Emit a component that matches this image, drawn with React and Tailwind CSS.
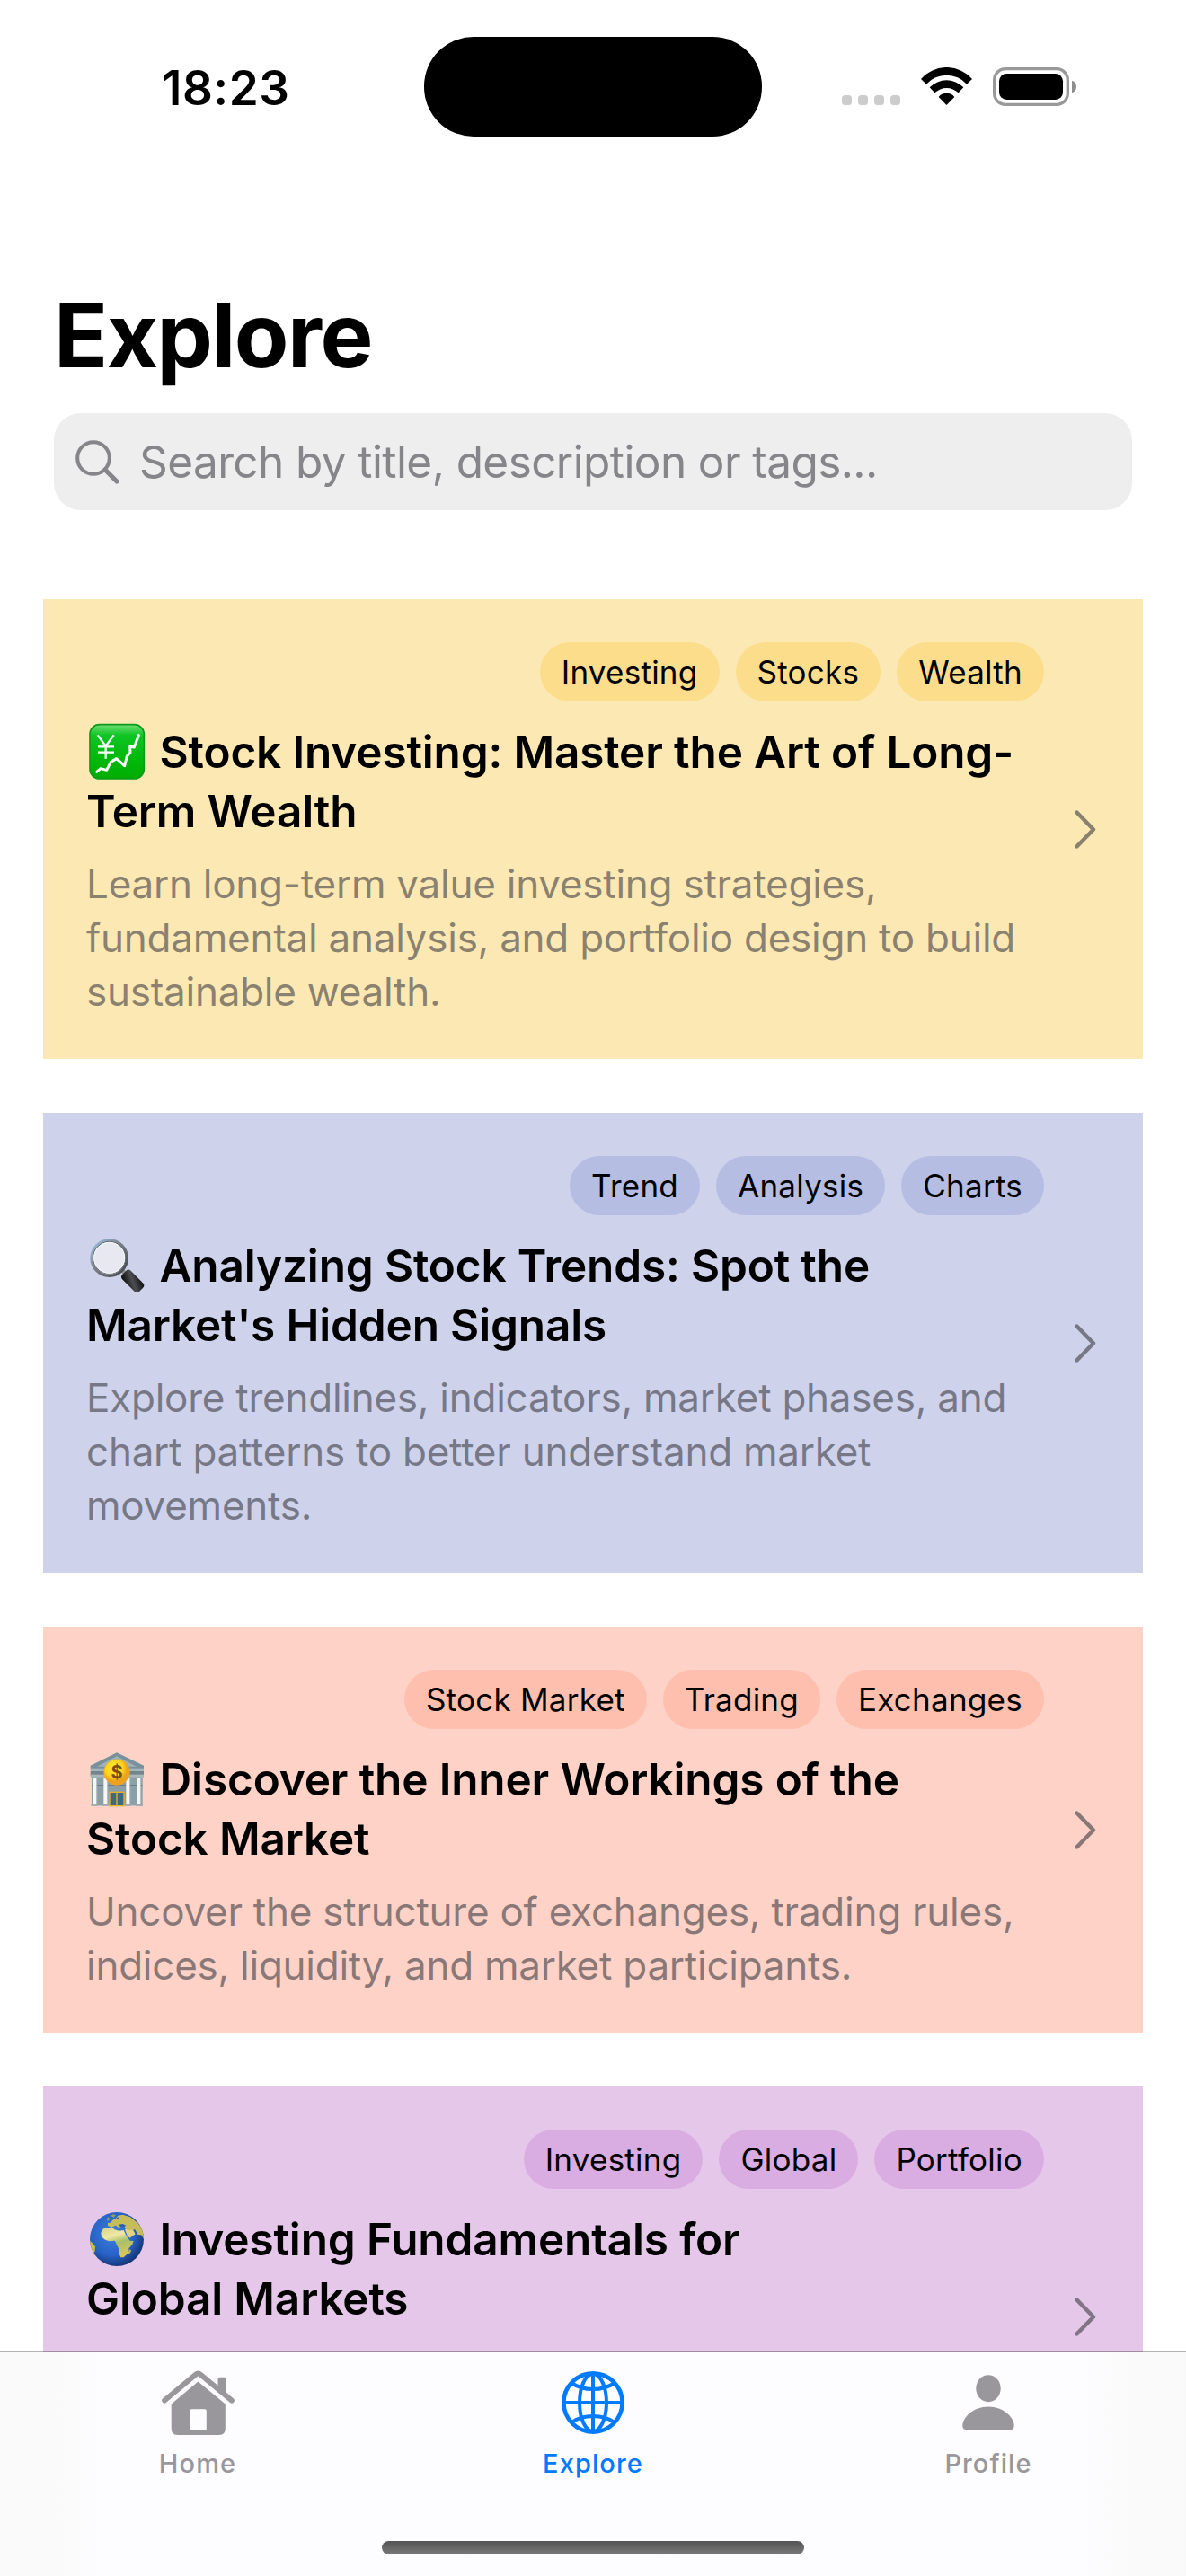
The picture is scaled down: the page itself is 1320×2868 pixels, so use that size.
const courses = [
    {
        id: 1,
        icon: 'chart',
        tags: ['Investing', 'Stocks', 'Wealth'],
        title: ['Stock Investing: Master the Art of Long-', 'Term Wealth'],
        description: [
            'Learn long-term value investing strategies,',
            'fundamental analysis, and portfolio design to build',
            'sustainable wealth.',
        ],
        card: 'bg-[#fce8b2] h-[512px]',
        tag: 'bg-[#fbdd8c]',
    },
    {
        id: 2,
        icon: 'magnifier',
        tags: ['Trend', 'Analysis', 'Charts'],
        title: ['Analyzing Stock Trends: Spot the', "Market's Hidden Signals"],
        description: [
            'Explore trendlines, indicators, market phases, and',
            'chart patterns to better understand market',
            'movements.',
        ],
        card: 'bg-[#ced2eb] h-[512px]',
        tag: 'bg-[#b6bde3]',
    },
    {
        id: 3,
        icon: 'bank',
        tags: ['Stock Market', 'Trading', 'Exchanges'],
        title: ['Discover the Inner Workings of the', 'Stock Market'],
        description: [
            'Uncover the structure of exchanges, trading rules,',
            'indices, liquidity, and market participants.',
        ],
        card: 'bg-[#fed2c6] h-[452px]',
        tag: 'bg-[#febfae]',
    },
    {
        id: 4,
        icon: 'globe',
        tags: ['Investing', 'Global', 'Portfolio'],
        title: ['Investing Fundamentals for', 'Global Markets'],
        description: [],
        card: 'bg-[#e5c8e9] h-[512px]',
        tag: 'bg-[#d9ade2]',
    },
];

const emojiClass = 'inline-block w-[66px] h-[66px] mr-[15.5px] align-[-15px]';

function CourseEmoji({ name }) {
    if (name === 'chart') {
        return (
            <svg viewBox="48 72 198 198" className={emojiClass}>
                <defs>
                    <linearGradient id="green" x1="0" y1="0" x2="0" y2="1">
                        <stop offset="0" stopColor="#6fdc74" />
                        <stop offset="0.2" stopColor="#0fc524" />
                        <stop offset="0.6" stopColor="#00b90d" />
                        <stop offset="1" stopColor="#00ad00" />
                    </linearGradient>
                </defs>
                <rect x="60" y="80" width="181" height="181" rx="32" fill="url(#green)" stroke="#0b9a1c" strokeWidth="5" />
                <path d="M86 115l27 37 27-37M113 152v42M87 154h54M87 173h54" fill="none" stroke="#fff" strokeWidth="7" />
                <path d="M83 238l13-11 20 5 14-27 19-11 27 24 8-32 11-12-1-20 14 2 15-40" fill="none" stroke="#fff" strokeWidth="9" strokeLinejoin="round" strokeLinecap="round" />
            </svg>
        );
    }
    if (name === 'magnifier') {
        return (
            <svg viewBox="48 63 198 198" className={emojiClass}>
                <defs>
                    <linearGradient id="rim" x1="0" y1="0" x2="1" y2="1">
                        <stop offset="0" stopColor="#9fc4e6" />
                        <stop offset="0.45" stopColor="#7b8088" />
                        <stop offset="1" stopColor="#3f4347" />
                    </linearGradient>
                    <linearGradient id="handle" x1="0" y1="1" x2="1" y2="0">
                        <stop offset="0" stopColor="#050505" />
                        <stop offset="0.5" stopColor="#4c4d50" />
                        <stop offset="1" stopColor="#0a0a0b" />
                    </linearGradient>
                </defs>
                <path d="M168 178l14 14" stroke="#8b8e93" strokeWidth="14" />
                <rect x="-40" y="-20" width="80" height="40" rx="12" transform="translate(203 214) rotate(45)" fill="url(#handle)" />
                <circle cx="125" cy="137" r="59" fill="#e8e9f0" stroke="url(#rim)" strokeWidth="10" />
                <circle cx="125" cy="136" r="54" fill="none" stroke="#55595e" strokeWidth="2.5" />
                <circle cx="125" cy="136" r="51" fill="none" stroke="#f6f7fa" strokeWidth="3" />
            </svg>
        );
    }
    if (name === 'bank') {
        return (
            <svg viewBox="48 69 198 198" className={emojiClass}>
                <defs>
                    <radialGradient id="coin" cx="0.4" cy="0.35">
                        <stop offset="0" stopColor="#ffec35" />
                        <stop offset="0.7" stopColor="#fbd21c" />
                        <stop offset="1" stopColor="#eda11c" />
                    </radialGradient>
                </defs>
                <rect x="66" y="155" width="170" height="101" fill="#8d9fa6" />
                <path d="M66 189h170" stroke="#6b7d85" strokeWidth="6" />
                <path d="M150 79L62 122v10h178v-10z" fill="#78919a" />
                <path d="M150 91L84 125h132z" fill="#9fb3b8" />
                <rect x="62" y="131" width="178" height="12" fill="#a6b5b9" />
                <rect x="62" y="141" width="178" height="15" fill="#73858c" />
                <rect x="62" y="152" width="178" height="9" fill="#a9b6ba" />
                <path d="M76 162v88M112 162v88M187 162v88M223 162v88" stroke="#f5f6f8" strokeWidth="12" />
                <path d="M83 164v86M119 164v86M194 164v86M230 164v86" stroke="#b6bfc5" strokeWidth="3" />
                <path d="M64 254h24M102 254h22M177 254h22M212 254h25" stroke="#9cabb1" strokeWidth="7" />
                <rect x="126" y="211" width="48" height="46" fill="#3f6a7d" stroke="#e8b124" strokeWidth="4" />
                <path d="M150 211v46" stroke="#e8b124" strokeWidth="4" />
                <circle cx="150" cy="144" r="43" fill="url(#coin)" stroke="#eba62a" strokeWidth="2" />
                <text x="150" y="165" textAnchor="middle" fontSize="60" fontWeight="700" fill="#7c4a12" className="font-['Inter']">$</text>
            </svg>
        );
    }
    return (
        <svg viewBox="48 60 198 198" className={emojiClass}>
            <defs>
                <radialGradient id="ocean" cx="0.42" cy="0.4" r="0.62">
                    <stop offset="0" stopColor="#3d7fdc" />
                    <stop offset="0.65" stopColor="#2762c4" />
                    <stop offset="1" stopColor="#143575" />
                </radialGradient>
                <linearGradient id="land" x1="0" y1="0" x2="0.3" y2="1">
                    <stop offset="0" stopColor="#d6d184" />
                    <stop offset="0.35" stopColor="#f0e9a6" />
                    <stop offset="0.6" stopColor="#a8bf6a" />
                    <stop offset="1" stopColor="#d5c65e" />
                </linearGradient>
                <clipPath id="earth">
                    <circle cx="150" cy="159" r="90" />
                </clipPath>
            </defs>
            <circle cx="150" cy="159" r="90" fill="url(#ocean)" />
            <g clipPath="url(#earth)">
                <path d="M105 124l20-4 14 1 2 5 16 5 16-2 9 19 12 16 12 1-4 11-12 14 1 14-11 9-7 7-10 0-6-14-1-16-7-14-5-12-19 2-14-5-12-10-2-14z" fill="url(#land)" />
                <path d="M177 127l23-6 12 21-19 13-9-10z" fill="#e3d37c" />
                <path d="M120 113l0-8 10-1 6-9 10-4 8-11 16-3 25 8 25 20 18 24 9 22-3 15-12-21-12-1-9-17-20 2-12-4-3-9-13 2-7 3-9-8-9 3-5 4z" fill="#c6bd5a" />
                <path d="M130 81l7-5 10 2-7 8zM116 91l6-6 5 8-8 5z" fill="#8fa455" />
                <path d="M157 110l13-2 11 5-5 4-14 1zM148 89l10-6-3 10z" fill="#2a5fae" />
                <path d="M187 204l8-12 3 7-7 11z" fill="#c3b650" />
                <path d="M58 163l11 9 9 12-1 15-5 10-12-20z" fill="#c9bd3c" />
            </g>
        </svg>
    );
}

function CourseCard({ course }) {
    return (
        <div className={`shrink-0 flex items-center justify-between pl-12 pr-[52px] ${course.card}`}>
            <div className="w-[1066px] h-full pt-12">
                <div className="flex justify-end gap-[18px]">
                    {course.tags.map(tag => (
                        <span key={tag} className={`h-[66px] px-6 rounded-[33px] text-[35px] leading-[66px] tracking-[0.25px] ${course.tag}`}>
                            {tag}
                        </span>
                    ))}
                </div>
                <h2 className="mt-[23px] text-[49.5px] leading-[66px] font-semibold tracking-[-0.15px] whitespace-nowrap">
                    <CourseEmoji name={course.icon} />
                    {course.title[0]}
                    <br />
                    {course.title[1]}
                </h2>
                <p className="mt-[18px] text-[44px] leading-[60px] tracking-[-0.25px] text-[#3c3c43]/60 whitespace-nowrap">
                    {course.description.map(line => (
                        <span key={line} className="block">{line}</span>
                    ))}
                </p>
            </div>
            <svg viewBox="0 0 24 43" className="w-6 h-[43px] text-[#3c3c43]/60">
                <path d="M2.5 2.5L21 21.5 2.5 40.5" fill="none" stroke="currentColor" strokeWidth="4.4" strokeLinecap="round" strokeLinejoin="round" />
            </svg>
        </div>
    );
}

function StatusBar() {
    return (
        <div className="h-[177px] shrink-0 flex items-start">
            <div className="w-[472px] pl-[180px] pt-[68px] text-[53px] leading-[60px] font-semibold tracking-[0.5px]">18:23</div>
            <div className="w-[376px] h-[111px] mt-[41px] rounded-[55px] bg-black" />
            <div className="flex gap-[23px] ml-[89px] mt-[75px] h-[43px]">
                {/* no signal */}
                <div className="flex items-end gap-[7px] pb-px">
                    <div className="w-[11px] h-[11px] rounded-[3.5px] bg-[#cccccc]" />
                    <div className="w-[11px] h-[11px] rounded-[3.5px] bg-[#cccccc]" />
                    <div className="w-[11px] h-[11px] rounded-[3.5px] bg-[#cccccc]" />
                    <div className="w-[11px] h-[11px] rounded-[3.5px] bg-[#cccccc]" />
                </div>
                {/* wifi */}
                <svg viewBox="375 75 171 126" className="w-[57px] h-[42px]">
                    <path d="M375 114A113 113 0 0 1 546 114L528 131A91 91 0 0 0 393 131Z" />
                    <path d="M404 142A78.5 78.5 0 0 1 517 142L500 160A57 57 0 0 0 421 160Z" />
                    <path d="M434 174A33.5 33.5 0 0 1 487 174L460.500 201Z" />
                </svg>
                {/* battery */}
                <svg viewBox="615 75 279 129" className="w-[93px] h-[43px]">
                    <rect x="620" y="80" width="245" height="119" rx="37" fill="none" stroke="#999" strokeWidth="10" />
                    <rect x="636" y="96" width="213" height="87" rx="25" />
                    <path d="M879 119q15 5 15 20.500t-15 20.500z" fill="#8c8c8c" />
                </svg>
            </div>
        </div>
    );
}

function TabBar() {
    return (
        <nav className="relative -mt-px h-[250px] shrink-0 flex flex-col items-center border-t border-black/30 bg-clip-padding bg-[linear-gradient(to_right,#f9f9f9,#fdfcfe_10%,#fdfcfe_90%,#f9f9f9)]">
            <div className="w-full grid grid-cols-3 pt-5 text-[29px] leading-9 font-medium tracking-[1.1px] text-[#99979b]">
                <div className="flex flex-col items-center">
                    <div className="h-[72px] flex items-center">
                        <svg viewBox="0 0 81 72" className="w-[81px] h-[72px]">
                            <path d="M3.200 33.500L38 4.500q2.500-2 5 0L77.800 33.500" fill="none" stroke="#99979b" strokeWidth="6" strokeLinecap="round" strokeLinejoin="round" />
                            <path d="M62.500 20V10q0-2.300 2.300-2.300h5Q72 7.700 72 10V28z" fill="#99979b" />
                            <path fillRule="evenodd" d="M40.500 12.500L70.800 37.500V65q0 7-7 7H17.700q-7 0-7-7V37.500zM33 43.300q-1.800 0-1.800 1.800V66.300H49.800V45.100q0-1.800-1.800-1.800z" fill="#99979b" />
                        </svg>
                    </div>
                    <span className="mt-[14px]">Home</span>
                </div>
                <div className="flex flex-col items-center text-[#007aff]">
                    <div className="h-[72px] flex items-center">
                        <svg viewBox="0 0 70 70" className="w-[70px] h-[70px]" fill="none" stroke="currentColor" strokeWidth="4">
                            <circle cx="35" cy="35" r="32.600" strokeWidth="4.600" />
                            <ellipse cx="35" cy="35" rx="15" ry="32" />
                            <path d="M35 2v66M2 35h66" />
                            <path d="M11 13Q21 20 35 20T59 13M11 57Q21 50 35 50T59 57" />
                        </svg>
                    </div>
                    <span className="mt-[14px]">Explore</span>
                </div>
                <div className="flex flex-col items-center">
                    <div className="h-[72px] flex items-center">
                        <svg viewBox="0 0 58 62" className="w-[58px] h-[62px]" fill="#99979b">
                            <ellipse cx="29" cy="15.200" rx="13.700" ry="15" />
                            <path d="M29 35.500C46 35.500 57.700 47.500 57.700 56.500Q57.700 61.500 52.500 61.500H5.500Q.3 61.500 .3 56.500C.3 47.500 12 35.500 29 35.500z" />
                        </svg>
                    </div>
                    <span className="mt-[14px]">Profile</span>
                </div>
            </div>
            {/* home indicator */}
            <div className="mt-auto mb-6 w-[470px] h-[15px] rounded-full bg-linear-to-b from-[#545454] to-[#7a7a7a]" />
        </nav>
    );
}

export default function App() {
    return (
        <div className="w-[1320px] h-[2868px] flex flex-col overflow-hidden bg-white text-black font-['Inter',sans-serif]">
            <StatusBar />
            <header className="h-[490px] shrink-0 px-[60px] pt-[136px]">
                <h1 className="text-[99px] leading-[120px] font-bold tracking-[-1.5px]">Explore</h1>
                <div className="mt-[27px] h-[108px] flex items-center gap-[22px] pl-6 rounded-[30px] bg-[#eeeeee] text-[#85858a]">
                    <svg viewBox="0 0 49 49" className="w-[49px] h-[49px]" fill="none" stroke="currentColor" strokeLinecap="round">
                        <circle cx="20" cy="20" r="17.800" strokeWidth="4" />
                        <path d="M33 33L46 46" strokeWidth="5.200" />
                    </svg>
                    <span className="pt-px text-[49.5px] tracking-[-0.59px]">Search by title, description or tags...</span>
                </div>
            </header>
            <main className="h-[1952px] shrink-0 px-12 flex flex-col gap-[60px] overflow-hidden">
                {courses.map(course => (
                    <CourseCard key={course.id} course={course} />
                ))}
            </main>
            <TabBar />
        </div>
    );
}
